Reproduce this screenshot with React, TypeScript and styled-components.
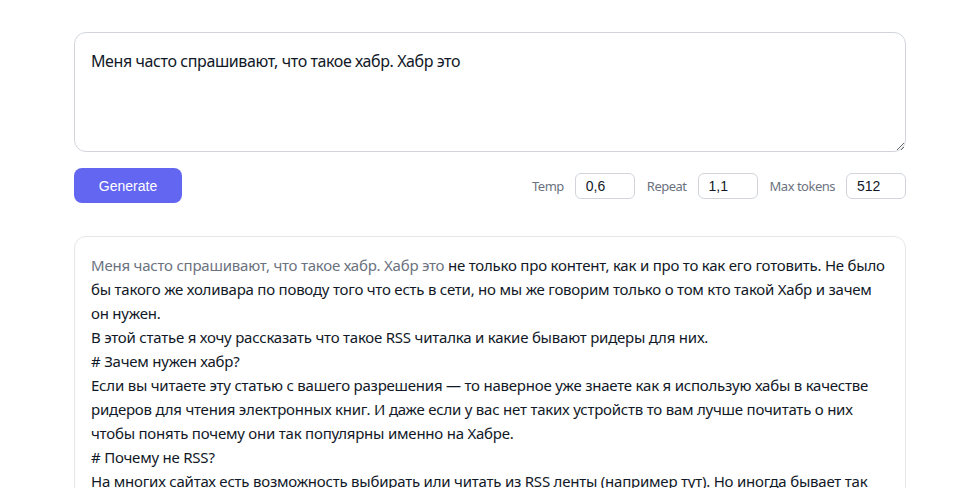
import { useState } from "react";
import styled, { createGlobalStyle } from "styled-components";

const GlobalStyle = createGlobalStyle`
  body {
    margin: 0;
    background: #ffffff;
    font-family: "Noto Sans", "Open Sans", sans-serif;
    color: #111827;
  }
`;

const Page = styled.main`
  max-width: 832px;
  margin: 32px auto 0;
  display: flex;
  flex-direction: column;
`;

const Prompt = styled.textarea`
  box-sizing: border-box;
  height: 120px;
  padding: 16px;
  border: 1px solid #d1d5db;
  border-radius: 12px;
  font-family: inherit;
  font-size: 16px;
  letter-spacing: -0.4px;
  line-height: 24px;
  color: #111827;
  resize: vertical;
  outline: none;
`;

const Controls = styled.div`
  display: flex;
  align-items: center;
  justify-content: space-between;
  margin-top: 16px;
`;

const GenerateButton = styled.button`
  width: 108px;
  height: 35px;
  border: none;
  border-radius: 8px;
  background: #6366f1;
  color: #ffffff;
  font-family: "Liberation Sans", Arial, sans-serif;
  font-size: 14px;
  cursor: pointer;
`;

const Params = styled.div`
  display: flex;
  align-items: center;
`;

const ParamLabel = styled.label`
  font-size: 13px;
  letter-spacing: -0.5px;
  color: #6b7280;
  margin: 0 11px 0 12px;
`;

const ParamInput = styled.input`
  box-sizing: border-box;
  width: 60px;
  height: 26px;
  padding: 0 10px;
  border: 1px solid #d1d5db;
  border-radius: 6px;
  font-family: "Liberation Sans", Arial, sans-serif;
  font-size: 14px;
  color: #111827;
  outline: none;
`;

const Output = styled.div`
  margin-top: 33px;
  padding: 16px;
  border: 1px solid #e5e7eb;
  border-radius: 12px;
  font-size: 15px;
  letter-spacing: -0.22px;
  line-height: 24px;
  white-space: pre-wrap;
  color: #111827;
`;

const PromptEcho = styled.span`
  color: #6b7280;
`;

const promptText = "Меня часто спрашивают, что такое хабр. Хабр это";

const generated = ` не только про контент, как и про то как его готовить. Не было бы такого же холивара по поводу того что есть в сети, но мы же говорим только о том кто такой Хабр и зачем он нужен.
В этой статье я хочу рассказать что такое RSS читалка и какие бывают ридеры для них.
# Зачем нужен хабр?
Если вы читаете эту статью с вашего разрешения — то наверное уже знаете как я использую хабы в качестве ридеров для чтения электронных книг. И даже если у вас нет таких устройств то вам лучше почитать о них чтобы понять почему они так популярны именно на Хабре.
# Почему не RSS?
На многих сайтах есть возможность выбирать или читать из RSS ленты (например тут). Но иногда бывает так что хочется получить больше информации о том что происходит на сайте.`;

export default function App() {
  const [prompt, setPrompt] = useState(promptText);
  const [temp, setTemp] = useState("0,6");
  const [repeat, setRepeat] = useState("1,1");
  const [maxTokens, setMaxTokens] = useState("512");

  return (
    <>
      <GlobalStyle />
      <Page>
        <Prompt value={prompt} onChange={(e) => setPrompt(e.target.value)} />
        <Controls>
          <GenerateButton>Generate</GenerateButton>
          <Params>
            <ParamLabel>Temp</ParamLabel>
            <ParamInput value={temp} onChange={(e) => setTemp(e.target.value)} />
            <ParamLabel>Repeat</ParamLabel>
            <ParamInput value={repeat} onChange={(e) => setRepeat(e.target.value)} />
            <ParamLabel>Max tokens</ParamLabel>
            <ParamInput value={maxTokens} onChange={(e) => setMaxTokens(e.target.value)} />
          </Params>
        </Controls>
        <Output>
          <PromptEcho>{promptText}</PromptEcho>
          {generated}
        </Output>
      </Page>
    </>
  );
}
